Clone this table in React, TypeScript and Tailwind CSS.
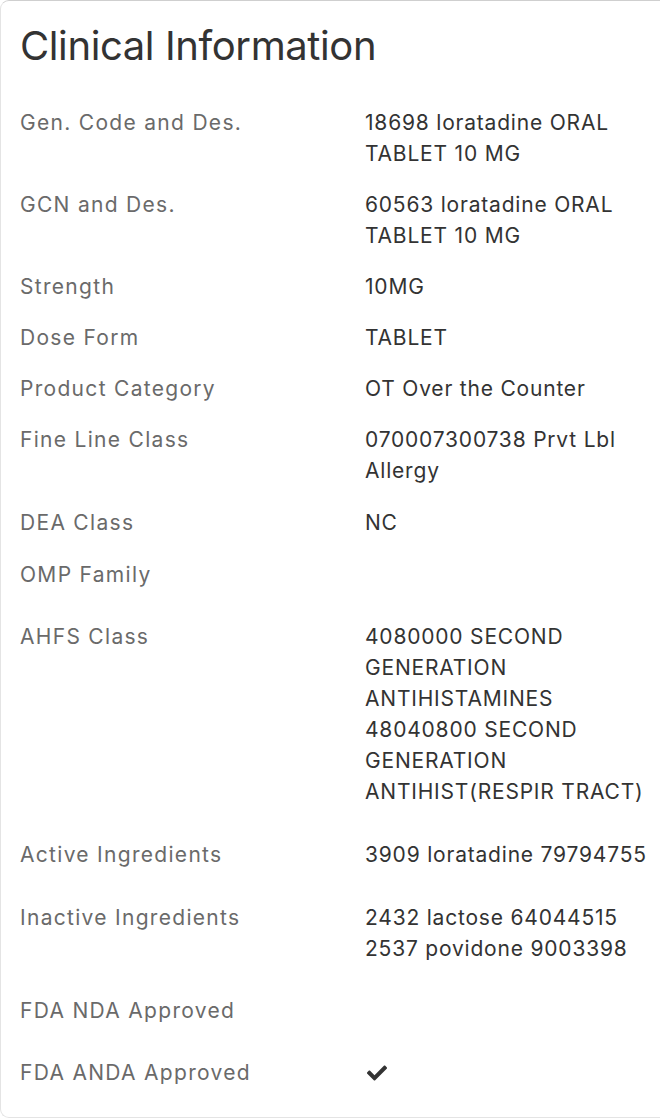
import { FaCheck } from "react-icons/fa";

type Row = { label: string; lines: (string | "CHECK")[]; mb: string };

const rows: Row[] = [
  { label: "Gen. Code and Des.", lines: ["18698 loratadine ORAL", "TABLET 10 MG"], mb: "mb-[20px]" },
  { label: "GCN and Des.", lines: ["60563 loratadine ORAL", "TABLET 10 MG"], mb: "mb-[20px]" },
  { label: "Strength", lines: ["10MG"], mb: "mb-[20px]" },
  { label: "Dose Form", lines: ["TABLET"], mb: "mb-[20px]" },
  { label: "Product Category", lines: ["OT Over the Counter"], mb: "mb-[20px]" },
  { label: "Fine Line Class", lines: ["070007300738 Prvt Lbl", "Allergy"], mb: "mb-[21px]" },
  { label: "DEA Class", lines: ["NC"], mb: "mb-[21px]" },
  { label: "OMP Family", lines: [], mb: "mb-[31px]" },
  {
    label: "AHFS Class",
    lines: [
      "4080000 SECOND",
      "GENERATION",
      "ANTIHISTAMINES",
      "48040800 SECOND",
      "GENERATION",
      "ANTIHIST(RESPIR TRACT)",
    ],
    mb: "mb-[32px]",
  },
  { label: "Active Ingredients", lines: ["3909 loratadine 79794755"], mb: "mb-[32px]" },
  { label: "Inactive Ingredients", lines: ["2432 lactose 64044515", "2537 povidone 9003398"], mb: "mb-[31px]" },
  { label: "FDA NDA Approved", lines: [], mb: "mb-[31px]" },
  { label: "FDA ANDA Approved", lines: ["CHECK"], mb: "mb-0" },
];

export default function App() {
  return (
    <div className="w-[660px] h-[1118px] overflow-hidden bg-white">
      <div
        className="w-[720px] h-[1118px] border border-[#cfcfcf] border-l-[#e4e4e4] border-b-[#e4e4e4] rounded-[9px] pl-[19px] pt-[21px]"
        style={{ fontFamily: "Inter, 'Noto Sans', sans-serif" }}
      >
        <h1 className="text-[40px] leading-[48px] text-[#333333] tracking-[-0.4px] font-normal">
          Clinical Information
        </h1>
        <div className="mt-[37px] flex flex-col">
          {rows.map((r, i) => (
            <div key={i} className={`flex ${r.mb}`}>
              <div className="w-[345px] shrink-0 text-[21px] leading-[31px] text-[#6a6a6a] tracking-[1.3px] whitespace-nowrap">
                {r.label}
              </div>
              <div className="flex flex-col min-h-[31px] text-[21px] leading-[31px] text-[#333333] tracking-[0.8px] whitespace-nowrap">
                {r.lines.map((l, j) =>
                  l === "CHECK" ? (
                    <div key={j} className="h-[31px] flex items-center pl-[2px]">
                      <FaCheck className="w-[20px] h-[20px] text-[#333333]" />
                    </div>
                  ) : (
                    <div key={j}>{l}</div>
                  )
                )}
              </div>
            </div>
          ))}
        </div>
      </div>
    </div>
  );
}
